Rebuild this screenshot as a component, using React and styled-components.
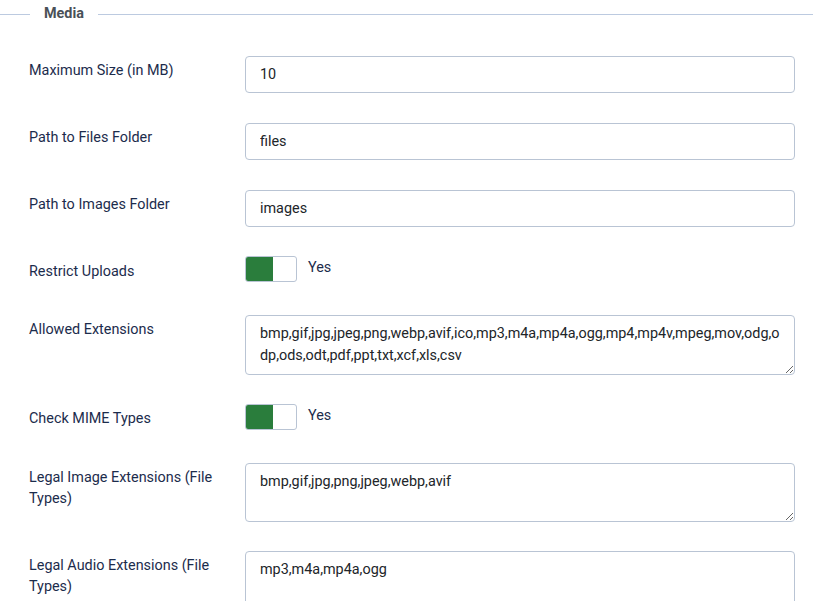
import React from 'react';
import styled, { createGlobalStyle } from 'styled-components';

const GlobalStyle = createGlobalStyle`
  body {
    margin: 0;
    background: #fff;
    font-family: Roboto, 'Liberation Sans', sans-serif;
  }
`;

const Fieldset = styled.fieldset`
  margin: 7px 0 0;
  padding: 35px 18px 0 29px;
  border: 0;
  border-top: 1px solid #bccae0;
  min-width: 0;
`;

const Legend = styled.legend`
  margin-left: 1px;
  padding: 0 14px;
  font-size: 14.4px;
  font-weight: 700;
  color: #495057;
  line-height: 14px;
`;

const Row = styled.div`
  display: grid;
  grid-template-columns: 216px 1fr;
  margin-bottom: ${(p) => p.$gap || 30}px;
`;

const Label = styled.label`
  font-size: 14.4px;
  line-height: 21.6px;
  color: #1c2c4c;
  padding-top: ${(p) => p.$top || 4}px;
  padding-right: 16px;
`;

const Input = styled.input`
  box-sizing: border-box;
  width: 100%;
  height: 37px;
  padding: 0 14px;
  border: 1px solid #b9c4d4;
  border-radius: 4px;
  font-family: Roboto, 'Liberation Sans', sans-serif;
  font-size: 14.4px;
  color: #212529;
  background: #fff;
`;

const Area = styled.textarea`
  box-sizing: border-box;
  width: 100%;
  height: ${(p) => p.$h}px;
  padding: 7px 14px;
  border: 1px solid #b9c4d4;
  border-radius: 4px;
  font-family: Roboto, 'Liberation Sans', sans-serif;
  font-size: 14.4px;
  line-height: 22px;
  color: #212529;
  background: #fff;
  resize: vertical;
  display: block;
`;

const SwitchWrap = styled.div`
  display: flex;
  align-items: center;
  gap: 11px;
  font-size: 14.4px;
  color: #1c2c4c;
`;

const Switch = styled.span`
  box-sizing: border-box;
  display: flex;
  width: 52px;
  height: 26px;
  border: 1px solid #b9c4d4;
  border-radius: 3px;
  overflow: hidden;
  background: #fff;
  &::before {
    content: '';
    width: 27px;
    background: #2a7d3c;
  }
`;

const SwitchText = styled.span`
  margin-top: -3px;
`;

function Toggle() {
  return (
    <SwitchWrap>
      <Switch />
      <SwitchText>Yes</SwitchText>
    </SwitchWrap>
  );
}

export default function App() {
  return (
    <>
      <GlobalStyle />
      <Fieldset>
        <Legend>Media</Legend>
        <Row>
          <Label>Maximum Size (in MB)</Label>
          <Input defaultValue="10" />
        </Row>
        <Row>
          <Label>Path to Files Folder</Label>
          <Input defaultValue="files" />
        </Row>
        <Row $gap={29}>
          <Label>Path to Images Folder</Label>
          <Input defaultValue="images" />
        </Row>
        <Row $gap={32}>
          <Label $top={5}>Restrict Uploads</Label>
          <Toggle />
        </Row>
        <Row $gap={29}>
          <Label>Allowed Extensions</Label>
          <Area
            $h={60}
            defaultValue="bmp,gif,jpg,jpeg,png,webp,avif,ico,mp3,m4a,mp4a,ogg,mp4,mp4v,mpeg,mov,odg,odp,ods,odt,pdf,ppt,txt,xcf,xls,csv"
          />
        </Row>
        <Row $gap={33}>
          <Label $top={4}>Check MIME Types</Label>
          <Toggle />
        </Row>
        <Row $gap={29}>
          <Label>Legal Image Extensions (File Types)</Label>
          <Area $h={59} defaultValue="bmp,gif,jpg,png,jpeg,webp,avif" />
        </Row>
        <Row>
          <Label>Legal Audio Extensions (File Types)</Label>
          <Area $h={59} defaultValue="mp3,m4a,mp4a,ogg" />
        </Row>
      </Fieldset>
    </>
  );
}
